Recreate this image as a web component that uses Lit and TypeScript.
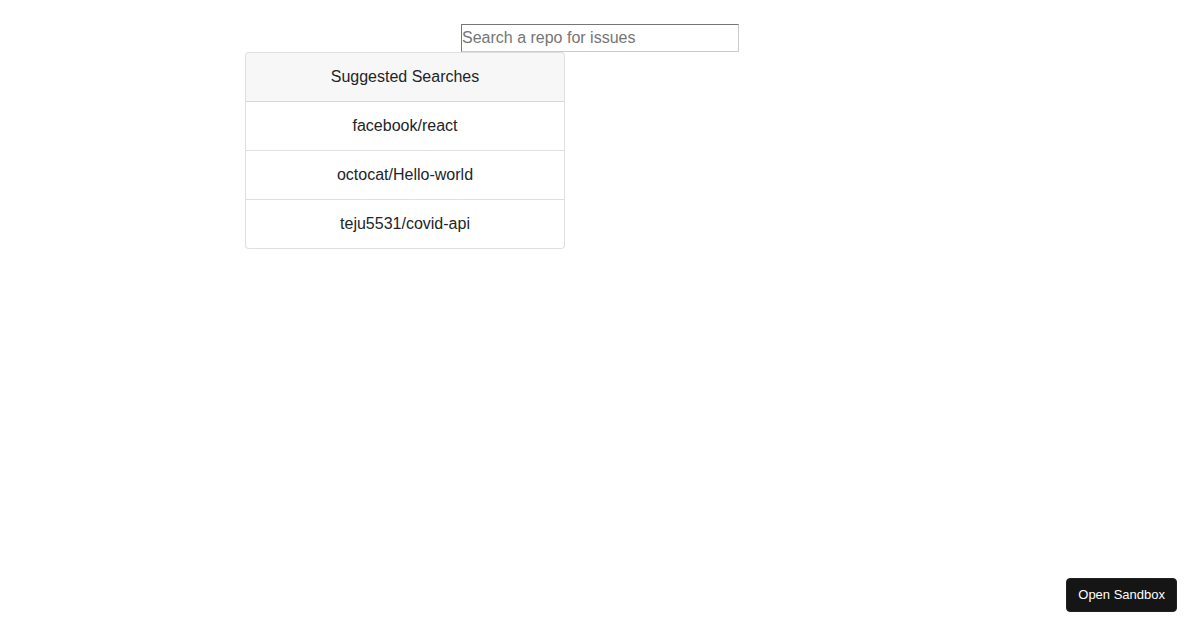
import { LitElement, html, css } from "lit";
import { customElement, property } from "lit/decorators.js";

@customElement("suggested-searches")
class SuggestedSearches extends LitElement {
  @property({ type: Array }) repos: string[] = [];

  static styles = css`
    :host {
      display: block;
    }
    .card {
      width: 320px;
      max-width: 100%;
      box-sizing: border-box;
      border: 1px solid rgba(0, 0, 0, 0.125);
      border-radius: 4px;
      background: #fff;
      overflow: hidden;
    }
    .header {
      padding: 12px 20px;
      background: rgba(0, 0, 0, 0.03);
      border-bottom: 1px solid rgba(0, 0, 0, 0.125);
    }
    .list {
      list-style: none;
      margin: 0;
      padding: 0;
    }
    .item + .item {
      border-top: 1px solid rgba(0, 0, 0, 0.125);
    }
    .link {
      display: block;
      padding: 12px 20px;
      color: inherit;
      text-decoration: none;
    }
  `;

  render() {
    return html`
      <section class="card">
        <div class="header">Suggested Searches</div>
        <ul class="list">
          ${this.repos.map(
            (repo) => html`<li class="item"><a class="link" href="#${repo}">${repo}</a></li>`
          )}
        </ul>
      </section>
    `;
  }
}

@customElement("app-root")
class AppRoot extends LitElement {
  static styles = css`
    :host {
      display: block;
      min-height: 100vh;
      box-sizing: border-box;
      padding-top: 24px;
      background: #fff;
      color: #212529;
      font: 16px/24px "Liberation Sans", Arial, sans-serif;
      text-align: center;
    }
    .form {
      display: flex;
      justify-content: center;
    }
    .search {
      box-sizing: border-box;
      width: 278px;
      height: 28px;
      padding: 1px 0;
      border: 1px solid;
      border-color: #767676 #cbcbcb #cbcbcb #767676;
      border-radius: 0;
      background: #fff;
      color: inherit;
      font: inherit;
    }
    .search::placeholder {
      color: #757575;
    }
    .content {
      box-sizing: border-box;
      width: 100%;
      max-width: 740px;
      margin: 0 auto;
      padding: 0 15px;
    }
    .sandbox {
      position: fixed;
      right: 23px;
      bottom: 18px;
      padding: 8px 11px;
      border: 1px solid #222;
      border-radius: 4px;
      background: #151515;
      color: #fff;
      font: 13px/16px "Liberation Sans", Arial, sans-serif;
    }
  `;

  render() {
    return html`
      <form class="form">
        <input class="search" type="text" aria-label="Search a repo for issues" placeholder="Search a repo for issues" />
      </form>
      <main class="content">
        <suggested-searches .repos=${["facebook/react", "octocat/Hello-world", "teju5531/covid-api"]}></suggested-searches>
      </main>
      <button class="sandbox" type="button">Open Sandbox</button>
    `;
  }
}
